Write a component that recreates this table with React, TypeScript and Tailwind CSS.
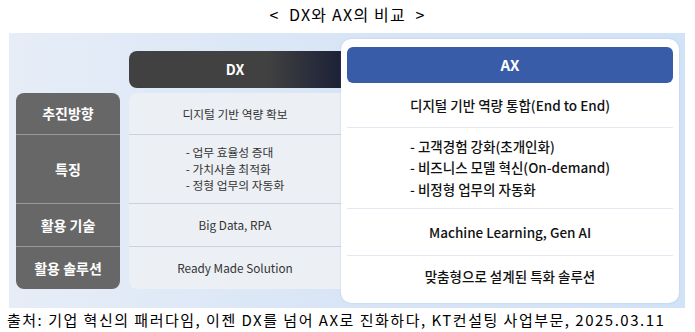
const KR = "font-['Noto_Sans_CJK_KR','Noto_Sans',sans-serif]"

const rows = [
  { label: '추진방향', h: 'h-[41px]', dx: ['디지털 기반 역량 확보'] },
  { label: '특징', h: 'h-[69px]', dx: ['- 업무 효율성 증대', '- 가치사슬 최적화', '- 정형 업무의 자동화'] },
  { label: '활용 기술', h: 'h-[43px]', dx: ['Big Data, RPA'] },
  { label: '활용 솔루션', h: 'h-[43px]', dx: ['Ready Made Solution'] },
]

const axRows = [
  { h: 'h-[44px]', lines: ['디지털 기반 역량 통합(End to End)'] },
  { h: 'h-[81px]', lines: ['- 고객경험 강화(초개인화)', '- 비즈니스 모델 혁신(On-demand)', '- 비정형 업무의 자동화'] },
  { h: 'h-[47px]', lines: ['Machine Learning, Gen AI'] },
  { h: 'h-[42px]', lines: ['맞춤형으로 설계된 특화 솔루션'] },
]

export default function App() {
  return (
    <div className={`w-[695px] h-[332px] bg-white ${KR}`}>
      <div className="h-[33px] flex items-center justify-center pb-[5px] text-[16px] tracking-[1.2px] text-black whitespace-pre">
        {'<  DX와 AX의 비교  >'}
      </div>

      <div className="mx-[9px] w-[676px] h-[275px] flex items-start pl-[7px] pr-[6px] bg-gradient-to-r from-[#e6edf7] via-[#d8e5f6] to-[#d2e2f7]">
        {/* row labels */}
        <div className="mt-[60px] w-[104px] flex flex-col rounded-lg bg-[#676767] overflow-hidden">
          {rows.map((r, i) => (
            <div
              key={r.label}
              className={`${r.h} flex items-center justify-center text-[14px] font-bold text-white ${i > 0 ? 'border-t border-[#9a9a9a]' : ''}`}
            >
              {r.label}
            </div>
          ))}
        </div>

        {/* DX column */}
        <div className="ml-[9px] mt-[18px] w-[212px] flex flex-col gap-[5px]">
          <div className="h-[37px] flex items-center justify-center rounded-l-lg bg-[linear-gradient(to_right,#414141_65%,#1c2137)] text-[14px] font-bold text-white">
            DX
          </div>
          <div className="flex flex-col rounded-l-lg bg-[#eceff4]">
            {rows.map((r, i) => (
              <div
                key={r.label}
                className={`${r.h} flex items-center justify-center text-[11.75px] text-[#333] ${i > 0 ? 'border-t border-[#cbd0da]' : ''}`}
              >
                <div className={r.dx.length > 1 ? 'leading-[16.5px]' : ''}>
                  {r.dx.map((t) => (
                    <div key={t}>{t}</div>
                  ))}
                </div>
              </div>
            ))}
          </div>
        </div>

        {/* AX card */}
        <div className="mt-[6px] w-[338px] h-[264px] flex flex-col rounded-[10px] bg-white px-[6px] pt-[8px] pb-[6px] shadow-[0_0_2px_rgba(120,150,200,0.35)]">
          <div className="h-[36px] shrink-0 flex items-center justify-center rounded-md bg-[#385ca8] text-[15px] font-bold text-white">
            AX
          </div>
          {axRows.map((r, i) => (
            <div
              key={i}
              className={`${r.h} shrink-0 flex items-center justify-center text-[13.5px] font-medium text-[#111] ${i > 0 ? 'border-t border-[#e3e8f1]' : ''}`}
            >
              <div className={r.lines.length > 1 ? 'leading-[21.5px]' : ''}>
                {r.lines.map((t) => (
                  <div key={t}>{t}</div>
                ))}
              </div>
            </div>
          ))}
        </div>
      </div>

      <div className="h-[24px] flex items-center pl-[7px] text-[15px] text-black tracking-[1.5px] whitespace-nowrap">
        출처: 기업 혁신의 패러다임, 이젠 DX를 넘어 AX로 진화하다, KT컨설팅 사업부문, 2025.03.11
      </div>
    </div>
  )
}
